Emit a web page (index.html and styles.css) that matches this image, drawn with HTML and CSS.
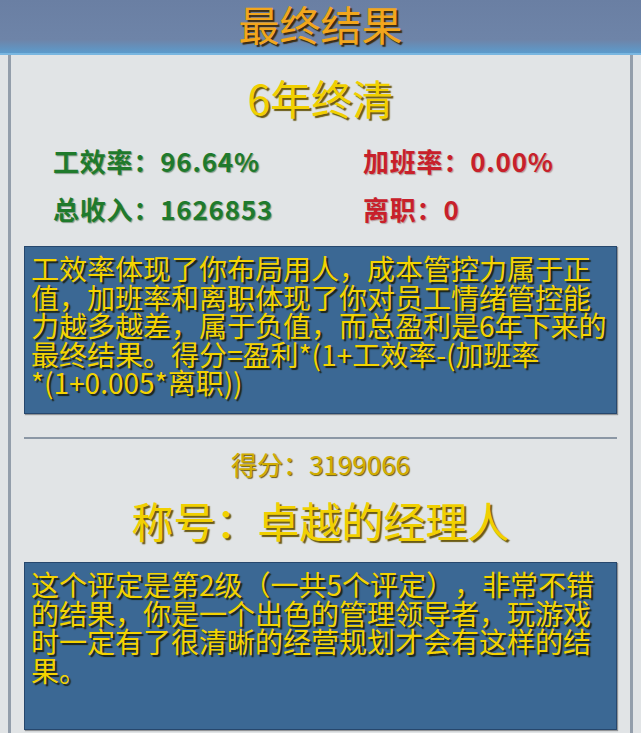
FILE: index.html
```html
<!DOCTYPE html>
<html lang="zh-CN">
  <head>
    <meta charset="UTF-8" />
    <meta name="viewport" content="width=device-width, initial-scale=1.0" />
    <title>最终结果</title>

    <link rel="stylesheet" href="styles.css">
  </head>

  <body>
    <div class="topbar">
      <h1>最终结果</h1>
    </div>

    <div class="panel">
      <h2 class="verdict">6年终清</h2>

      <div class="stats">
        <div class="good">工效率：96.64%</div>
        <div class="bad">加班率：0.00%</div>
        <div class="good">总收入：1626853</div>
        <div class="bad">离职：0</div>
      </div>

      <!-- word joiner keeps "*(" together so the formula wraps before the star -->
      <div class="note">
        工效率体现了你布局用人，成本管控力属于正值，加班率和离职体现了你对员工情绪管控能力越多越差，属于负值，而总盈利是6年下来的最终结果。得分=盈利*(1+工效率-(加班率*&#8288;(1+0.005*离职))
      </div>

      <hr class="divider" />

      <div class="score">得分：3199066</div>
      <h2 class="rank">称号：卓越的经理人</h2>

      <div class="note">
        这个评定是第2级（一共5个评定），非常不错的结果，你是一个出色的管理领导者，玩游戏时一定有了很清晰的经营规划才会有这样的结果。
      </div>
    </div>
  </body>
</html>
```

FILE: styles.css
```css
body {
  margin: 0;
  background-color: #e1e4e6;
  font-family: "Noto Sans CJK SC", "DejaVu Sans", sans-serif;
  text-spacing-trim: space-all;
}

.topbar {
  height: 52px;
  padding-top: 1px;
  background: linear-gradient(to bottom, #6a7fa3 0%, #6e84a8 75%, #5c9bcc 100%);
  border-bottom: 2px solid #79b6e0;
  text-align: center;
}

h1 {
  margin: 0;
  font-family: "DejaVu Sans", "Noto Sans CJK SC", sans-serif;
  font-size: 41px;
  line-height: 52px;
  font-weight: normal;
  color: #f2a61c;
  text-shadow: 2px 2px 1px #3a2c14;
}

.panel {
  margin: 0 8px;
  min-height: 678px;
  border-left: 3px solid #939eab;
  border-right: 3px solid #939eab;
  padding: 0 13px;
}

.verdict,
.rank {
  margin: 0;
  text-align: center;
  font-size: 41px;
  line-height: 50px;
  font-weight: normal;
  color: #f1d000;
  text-shadow: 2px 2px 1px #6a5a14;
}

.verdict {
  padding-top: 17px;
}

.stats {
  display: grid;
  grid-template-columns: 310px 1fr;
  padding: 15px 0 0 29px;
  font-size: 26px;
  line-height: 48px;
  font-weight: bold;
  letter-spacing: 0.8px;
}

.good {
  color: #1f7a2c;
  text-shadow: 1px 1px 1px #7f9a84;
}

.bad {
  color: #c8202a;
  text-shadow: 1px 1px 1px #b49a9a;
}

.note {
  box-sizing: border-box;
  height: 168px;
  margin-top: 13px;
  padding: 7px 4px 0 6px;
  background-color: #3b6894;
  border: 1px solid #26476d;
  box-shadow: 1px 1px 1px rgba(0, 0, 0, 0.35);
  color: #f4d300;
  font-size: 28px;
  line-height: 28.5px;
  text-shadow: 2px 2px 1px #1c2418;
}

.divider {
  margin: 23px 0 0 0;
  border: 0;
  border-top: 2px solid #8b97a5;
}

.score {
  margin-top: 8px;
  text-align: center;
  font-size: 26px;
  line-height: 34px;
  color: #d2ad00;
  text-shadow: 1px 1px 1px #6a5a14;
}

.rank {
  margin-top: 14px;
  font-size: 42px;
}

.rank + .note {
  margin-top: 17px;
}
```
